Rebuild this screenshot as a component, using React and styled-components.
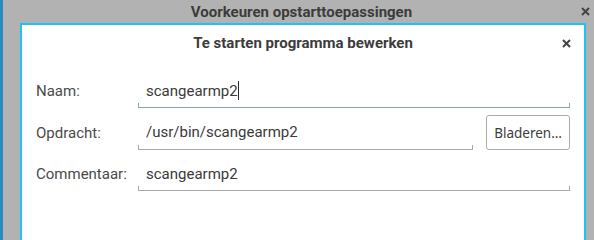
import React from "react";
import styled, { createGlobalStyle } from "styled-components";

const GlobalStyle = createGlobalStyle`
  html, body { margin: 0; padding: 0; }
  body {
    background: #b2b2b2;
    overflow: hidden;
    font-family: Roboto, "Liberation Sans", sans-serif;
  }
`;

const OuterWindow = styled.div`
  height: 215px;
  min-height: 100vh;
  border-left: 3px solid #2a8bc2;
  background: #b2b2b2;
  display: flex;
  flex-direction: column;
  box-sizing: border-box;
`;

const TitleBar = styled.div`
  height: ${(p) => p.$height}px;
  flex: 0 0 auto;
  display: flex;
  align-items: center;
  padding: 0 ${(p) => p.$padRight}px 0 ${(p) => p.$padLeft}px;
`;

const Title = styled.div`
  flex: 1;
  text-align: center;
  font-family: Roboto, "Liberation Sans", sans-serif;
  font-weight: 700;
  font-size: 15px;
  color: #3c3c3c;
  white-space: nowrap;
`;

const CloseButton = styled.span`
  width: 10px;
  height: 10px;
  display: flex;
  align-items: center;
  justify-content: center;
`;

const Dialog = styled.div`
  margin-left: 17px;
  width: 566px;
  flex: 1;
  box-sizing: border-box;
  border: 2px solid #1cc3f3;
  border-bottom: none;
  background: #ffffff;
  display: flex;
  flex-direction: column;
`;

const Form = styled.div`
  display: flex;
  flex-direction: column;
  gap: 7px;
  padding: 13px 14px 0 14px;
`;

const Row = styled.div`
  display: flex;
  align-items: center;
`;

const Label = styled.div`
  width: 102px;
  flex: 0 0 auto;
  font-size: 15px;
  color: #4a4a4a;
`;

const Entry = styled.div`
  position: relative;
  flex: 1;
  height: 34px;
  box-sizing: border-box;
  display: flex;
  align-items: center;
  padding-left: 8px;
  font-size: 15px;
  color: #3a3a3a;
  border-bottom: 1px solid ${(p) => (p.$focused ? "#8aa7ae" : "#a9a9a9")};

  &::before,
  &::after {
    content: "";
    position: absolute;
    bottom: 0;
    width: 1px;
    height: 4px;
    background: ${(p) => (p.$focused ? "#8aa7ae" : "#a9a9a9")};
  }
  &::before { left: 0; }
  &::after { right: 0; }
`;

const Caret = styled.span`
  display: inline-block;
  width: 1px;
  height: 19px;
  background: #2a2a2a;
`;

const Button = styled.button`
  margin-left: 13px;
  width: 84px;
  height: 35px;
  box-sizing: border-box;
  border: 1px solid #ababab;
  border-radius: 3px;
  background: #ffffff;
  font-family: "Noto Sans", "Open Sans", sans-serif;
  font-size: 13.5px;
  color: #3c3c3c;
  padding: 0;
`;

const XIcon = () => (
  <svg width="9" height="9" viewBox="0 0 9 9">
    <path d="M1 1 L8 8 M8 1 L1 8" stroke="#444" strokeWidth="2" strokeLinecap="butt" />
  </svg>
);

export default function App() {
  return (
    <>
      <GlobalStyle />
      <OuterWindow>
        <TitleBar $height={23} $padLeft={20} $padRight={4}>
          <Title>Voorkeuren opstarttoepassingen</Title>
          <CloseButton>
            <XIcon />
          </CloseButton>
        </TitleBar>
        <Dialog>
          <TitleBar $height={36} $padLeft={23} $padRight={13}>
            <Title>Te starten programma bewerken</Title>
            <CloseButton>
              <XIcon />
            </CloseButton>
          </TitleBar>
          <Form>
            <Row>
              <Label>Naam:</Label>
              <Entry $focused>
                scangearmp2
                <Caret />
              </Entry>
            </Row>
            <Row>
              <Label>Opdracht:</Label>
              <Entry>/usr/bin/scangearmp2</Entry>
              <Button>Bladeren…</Button>
            </Row>
            <Row>
              <Label>Commentaar:</Label>
              <Entry>scangearmp2</Entry>
            </Row>
          </Form>
        </Dialog>
      </OuterWindow>
    </>
  );
}
